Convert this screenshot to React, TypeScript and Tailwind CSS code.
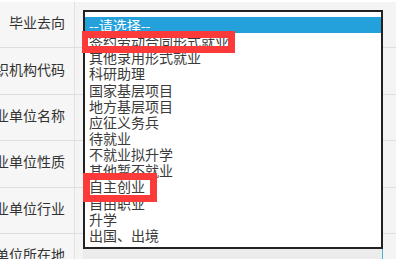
const labels = [
  "毕业去向",
  "组织机构代码",
  "就业单位名称",
  "就业单位性质",
  "就业单位行业",
  "就业单位所在地",
];

const options = [
  "--请选择--",
  "签约劳动合同形式就业",
  "其他录用形式就业",
  "科研助理",
  "国家基层项目",
  "地方基层项目",
  "应征义务兵",
  "待就业",
  "不就业拟升学",
  "其他暂不就业",
  "自主创业",
  "自由职业",
  "升学",
  "出国、出境",
];

export default function App() {
  return (
    <div
      className="relative w-[398px] h-[259px] overflow-hidden bg-white text-[14px]"
      style={{ fontFamily: '"Noto Sans CJK SC", "Noto Sans", sans-serif' }}
    >
      <div className="flex flex-col w-[396px] pt-[2px]">
        {labels.map((label, i) => (
          <div key={label} className="flex h-[46.4px] shrink-0 border-b border-[#dedede]">
            <div className="flex w-[75px] shrink-0 items-center justify-end overflow-hidden whitespace-nowrap border-r border-[#e2e2e2] bg-[#f6f6f6] pr-[9px] pb-[4px] text-[#333]">
              {label}
            </div>
            <div className="flex-1 bg-[#f4f4f4] pl-[8px] pt-[8px]">
              {i === labels.length - 1 && (
                <div className="h-[30px] w-[300px] border-r border-[#4fb0d8] bg-[#ececec]" />
              )}
            </div>
          </div>
        ))}
      </div>

      {/* open select list */}
      <div className="absolute left-[83px] top-[10px] flex h-[239px] w-[300px] flex-col border-2 border-[#222] bg-white pt-[5px]">
        {options.map((opt, i) => (
          <div
            key={opt}
            className={
              i === 0
                ? "h-[16.15px] shrink-0 whitespace-nowrap bg-[#24a0da] pl-[4px] leading-[16px] text-white"
                : "h-[16.15px] shrink-0 whitespace-nowrap pl-[4px] leading-[16px] text-[#3a3a3a]"
            }
          >
            {opt}
          </div>
        ))}
      </div>

      {/* red annotation boxes */}
      <div className="absolute left-[82px] top-[31px] h-[22px] w-[153px] border-[7px] border-l-[6px] border-[#fd3a3a]" />
      <div className="absolute left-[83px] top-[173px] h-[29px] w-[74px] border-[7px] border-[#fd3a3a]" />
    </div>
  );
}
